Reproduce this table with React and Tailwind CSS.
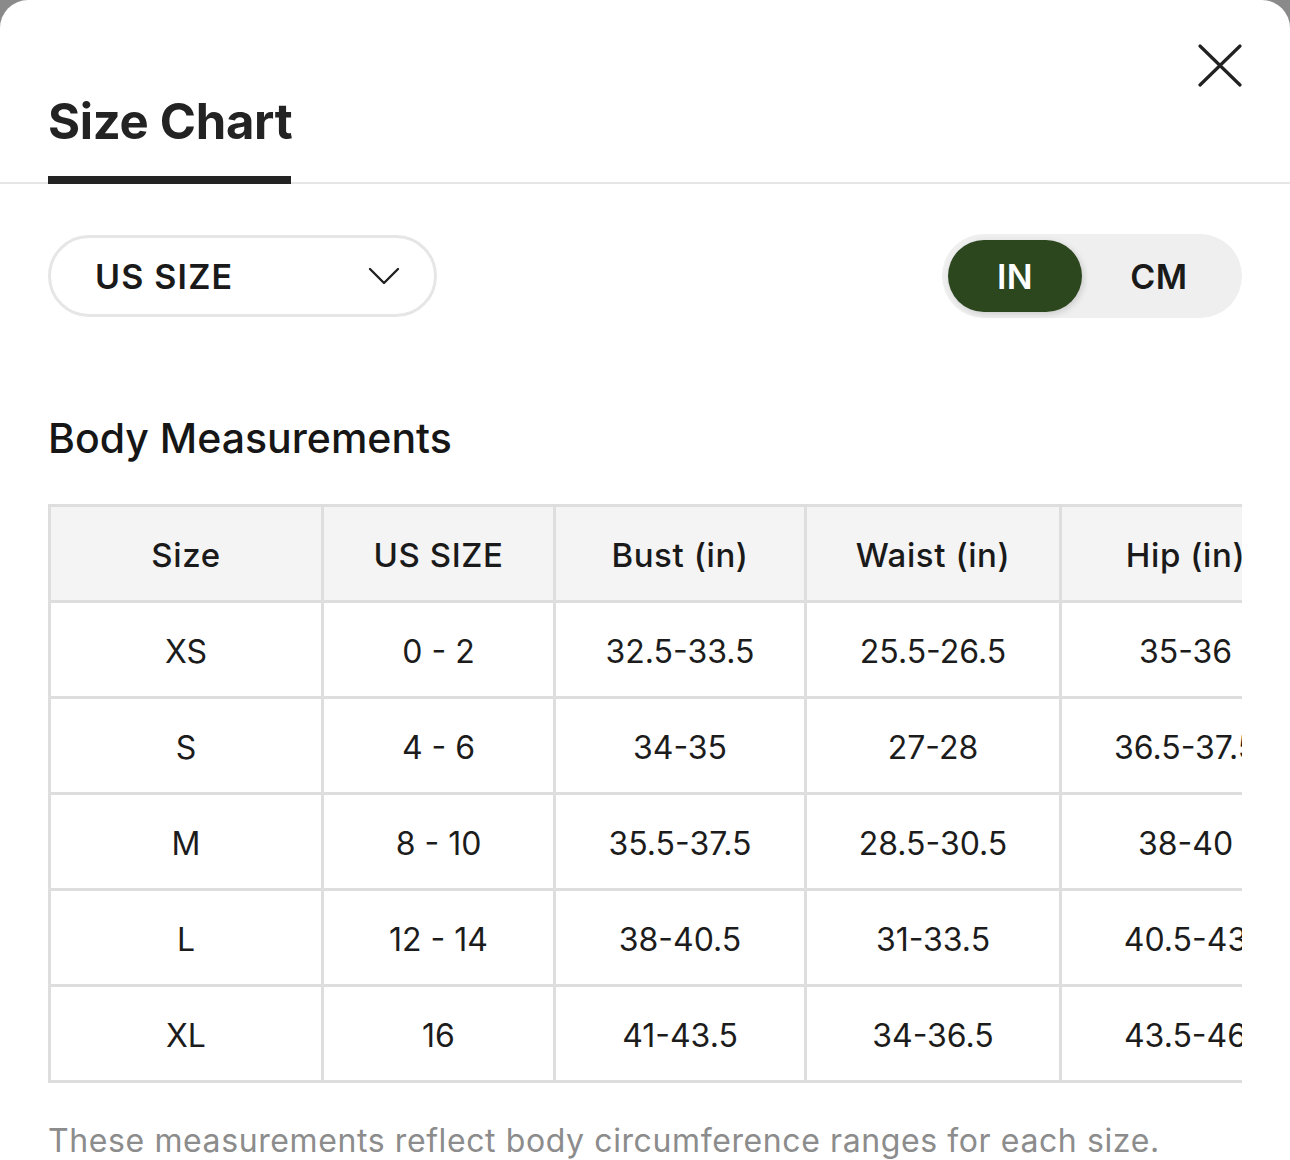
const rows = [
  ['XS', '0 - 2', '32.5-33.5', '25.5-26.5', '35-36'],
  ['S', '4 - 6', '34-35', '27-28', '36.5-37.5'],
  ['M', '8 - 10', '35.5-37.5', '28.5-30.5', '38-40'],
  ['L', '12 - 14', '38-40.5', '31-33.5', '40.5-43'],
  ['XL', '16', '41-43.5', '34-36.5', '43.5-46'],
];

const headers = ['Size', 'US SIZE', 'Bust (in)', 'Waist (in)', 'Hip (in)'];
const widths = ['w-[273px]', 'w-[232px]', 'w-[251px]', 'w-[255px]', 'w-[250px]'];

export default function App() {
  return (
    <div className="min-h-[1160px] bg-[#8a8a8a] font-['Inter',sans-serif] text-[#1c1c1c]">
      <div className="h-[1160px] overflow-hidden rounded-t-[28px] bg-white">
        {/* Header */}
        <div className="border-b-2 border-[#e6e6e6] px-12 pt-[44px]">
          <div className="flex justify-end">
            <button className="text-[#222]" aria-label="Close">
              <svg width="44" height="43" viewBox="0 0 44 43" fill="none" stroke="currentColor" strokeWidth="3.2" strokeLinecap="round">
                <path d="M2 2L42 41M42 2L2 41" />
              </svg>
            </button>
          </div>
          <div className="mt-[10px] inline-flex flex-col">
            <h1 className="text-[49px] leading-none font-bold tracking-[-0.3px] text-[#232323]">Size Chart</h1>
            <div className="-mb-[2px] mt-[30px] h-[8px] w-[243px] bg-[#232323]" />
          </div>
        </div>

        {/* Controls */}
        <div className="mt-[50px] flex items-center justify-between px-12">
          <div className="flex h-[82px] w-[389px] items-center justify-between rounded-full border-[3px] border-[#e6e6e6] pl-[44px] pr-[34px]">
            <span className="text-[34px] font-semibold tracking-[1.2px] text-[#1a1a1a]">US SIZE</span>
            <svg width="32" height="18" viewBox="0 0 32 18" fill="none" stroke="#222" strokeWidth="2.4" strokeLinecap="round" strokeLinejoin="round">
              <path d="M2 2L16 16L30 2" />
            </svg>
          </div>
          <div className="flex h-[84px] w-[300px] items-center rounded-full bg-[#efefef] p-[6px]">
            <div className="flex h-[72px] w-[134px] items-center justify-center rounded-full bg-[#2c461e] shadow-[2px_2px_6px_rgba(0,0,0,0.15)]">
              <span className="text-[34px] font-semibold tracking-[0.5px] text-white">IN</span>
            </div>
            <div className="flex flex-1 items-center justify-center">
              <span className="text-[34px] font-semibold tracking-[0.5px] text-[#1a1a1a]">CM</span>
            </div>
          </div>
        </div>

        {/* Body measurements */}
        <div className="px-12">
          <h2 className="mt-[100px] text-[41px] leading-none font-medium text-[#161616]">Body Measurements</h2>
          <div className="mt-[45px] w-[1194px] overflow-hidden">
            <table className="w-[1261px] table-fixed border-collapse text-center text-[32px]">
              <colgroup>
                {widths.map((w, i) => (
                  <col key={i} className={w} />
                ))}
              </colgroup>
              <thead>
                <tr className="h-[96px] bg-[#f4f4f4]">
                  {headers.map((h) => (
                    <th key={h} className="border-[3px] border-[#dedede] pt-[5px] text-[33px] font-medium tracking-[0.6px] text-[#1a1a1a]">
                      {h}
                    </th>
                  ))}
                </tr>
              </thead>
              <tbody>
                {rows.map((r) => (
                  <tr key={r[0]} className="h-[96px]">
                    {r.map((c, i) => (
                      <td key={i} className="border-[3px] border-[#dedede] pt-[5px] font-normal text-[#1c1c1c]">
                        {c}
                      </td>
                    ))}
                  </tr>
                ))}
              </tbody>
            </table>
          </div>
          <p className="mt-[42px] text-[32px] leading-none whitespace-nowrap tracking-[0.6px] text-[#8c8c8c]">
            These measurements reflect body circumference ranges for each size.
          </p>
        </div>
      </div>
    </div>
  );
}
